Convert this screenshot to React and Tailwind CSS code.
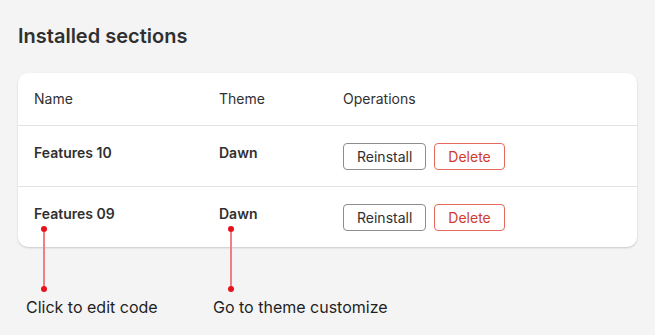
import React from 'react';

const rows = [
  { name: 'Features 10', theme: 'Dawn' },
  { name: 'Features 09', theme: 'Dawn' },
];

const Callout = ({ label }) => (
  <div className="flex flex-col">
    <div className="flex flex-col items-center w-[7px] ml-[14px]">
      <span className="w-[6px] h-[6px] rounded-full bg-[#e8101a]" />
      <span className="w-[2px] h-[54px] bg-[#ee7f83]" />
      <span className="w-[6px] h-[6px] rounded-full bg-[#e8101a]" />
    </div>
    <p className="mt-[3px] text-[16px] leading-6 text-[#1f1f1f] whitespace-nowrap">{label}</p>
  </div>
);

export default function App() {
  return (
    <div className="min-h-screen bg-[#f4f4f4] px-[18px] pt-[22px] font-['Inter','Noto_Sans',sans-serif] text-[#303030]">
      <h1 className="text-[20px] leading-7 font-semibold">Installed sections</h1>

      <div className="relative mt-[23px]">
        {/* Table card */}
        <div className="bg-white rounded-[10px] shadow-[0_1px_2px_rgba(0,0,0,0.18)] overflow-hidden">
          <div className="grid grid-cols-[185px_124px_1fr] px-4 py-4 text-[14px] leading-5 border-b border-[#e3e3e3]">
            <span>Name</span>
            <span>Theme</span>
            <span>Operations</span>
          </div>
          {rows.map((row, i) => (
            <div
              key={row.name}
              className={`grid grid-cols-[185px_124px_1fr] items-start px-4 pt-[17px] pb-4 text-[14px] leading-5 ${
                i < rows.length - 1 ? 'border-b border-[#e3e3e3]' : ''
              }`}
            >
              <span className="font-semibold">{row.name}</span>
              <span className="font-semibold">{row.theme}</span>
              <div className="flex gap-2">
                <button className="h-[27px] px-[13px] rounded-[4px] border border-[#8d8d8d] bg-white text-[14px] text-[#303030]">
                  Reinstall
                </button>
                <button className="h-[27px] px-[13px] rounded-[4px] border border-[#e5695c] bg-white text-[14px] text-[#cf3c2c]">
                  Delete
                </button>
              </div>
            </div>
          ))}
        </div>

        {/* Callouts */}
        <div className="absolute left-[8px] top-[153px] grid grid-cols-[187px_auto]">
          <Callout label="Click to edit code" />
          <Callout label="Go to theme customize" />
        </div>
      </div>
    </div>
  );
}
